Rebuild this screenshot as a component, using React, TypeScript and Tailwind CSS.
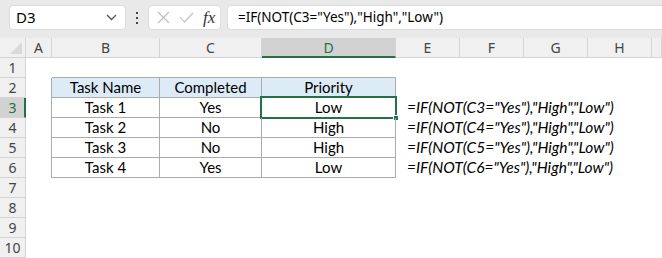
import React from "react";

const colW = [26, 26, 108, 102, 134, 64, 64, 64, 64, 10];
const colNames = ["", "A", "B", "C", "D", "E", "F", "G", "H", ""];

const data = [
  ["Task Name", "Completed", "Priority"],
  ["Task 1", "Yes", "Low"],
  ["Task 2", "No", "High"],
  ["Task 3", "No", "High"],
  ["Task 4", "Yes", "Low"],
];

const cellFont = { fontFamily: "Lato, 'Open Sans', sans-serif" };
const uiFont = { fontFamily: "'Noto Sans', 'Open Sans', sans-serif" };

function ColHeader() {
  return (
    <div className="flex h-[20px] bg-[#f0f0f0]" style={uiFont}>
      {colW.map((w, i) => {
        if (i === 0) {
          return (
            <div key={i} className="relative h-full border-r border-b border-[#d4d4d4] bg-[#f0f0f0]" style={{ width: w }}>
              <svg className="absolute right-[3px] bottom-[3px]" width="12" height="12" viewBox="0 0 12 12">
                <polygon points="12,0 12,12 0,12" fill="#d9d9d9" />
              </svg>
            </div>
          );
        }
        const sel = i === 4;
        return (
          <div
            key={i}
            className={
              sel
                ? "flex h-full items-center justify-center border-r border-[#d4d4d4] border-b-2 border-b-[#217346] bg-[#d2d2d2] text-[14px] text-[#217346]"
                : "flex h-full items-center justify-center border-r border-b border-[#d4d4d4] text-[14px] text-[#444]"
            }
            style={{ width: w }}
          >
            {colNames[i]}
          </div>
        );
      })}
    </div>
  );
}

function Row({ n }: { n: number }) {
  const tableRow = n >= 2 && n <= 6 ? data[n - 2] : null;
  const formula = n >= 3 && n <= 6 ? `=IF(NOT(C${n}="Yes"),"High","Low")` : null;
  return (
    <div className="flex h-[20px]">
      <div
        className={
          n === 3
            ? "flex h-full items-center justify-center border-b border-[#d4d4d4] border-r-2 border-r-[#217346] bg-[#d2d2d2] pl-[1px] text-[14px] text-[#217346]"
            : "flex h-full items-center justify-center border-r border-b border-[#d4d4d4] bg-[#f0f0f0] text-[14px] text-[#444]"
        }
        style={{ width: 26, ...uiFont }}
      >
        {n}
      </div>
      <div
        className={tableRow ? "h-full border-r border-[#ababab]" : "h-full"}
        style={{ width: 26 }}
      />
      {[0, 1, 2].map((c) => {
        const w = colW[c + 2];
        return (
          <div
            key={c}
            className={
              tableRow
                ? n === 2
                  ? "relative flex h-full items-center justify-center border-r border-b border-[#ababab] bg-[#ddebf7] text-[15px] text-black"
                  : "relative flex h-full items-center justify-center border-r border-b border-[#ababab] text-[15px] text-black"
                : n === 1
                ? "h-full border-b border-[#ababab]"
                : "h-full"
            }
            style={{ width: w, ...cellFont }}
          >
            {tableRow ? tableRow[c] : null}
            {n === 3 && c === 2 ? (
              <>
                <div className="absolute left-[-2px] top-[-2px] right-[-2px] bottom-[-2px] border-2 border-[#217346]" />
                <div className="absolute right-[-4px] bottom-[-4px] h-[6px] w-[6px] border border-white bg-[#217346]" />
              </>
            ) : null}
          </div>
        );
      })}
      <div className="relative h-full" style={{ width: 64 }}>
        {formula ? (
          <div
            className="absolute left-[11px] top-0 flex h-full items-center whitespace-nowrap text-[15.5px] italic text-black"
            style={cellFont}
          >
            {formula}
          </div>
        ) : null}
      </div>
    </div>
  );
}

export default function App() {
  return (
    <div className="h-[258px] w-[662px] overflow-hidden bg-white">
      <div className="flex h-[38px] items-start bg-[#e9e9e9] pt-[5px]" style={uiFont}>
        <div className="ml-[9px] flex h-[25px] w-[117px] items-center justify-between rounded-[4px] border border-[#dcdcdc] bg-white pl-[6px] pr-[8px] text-[15px] text-black">
          <span>D3</span>
          <svg width="11" height="7" viewBox="0 0 11 7">
            <polyline points="1,1 5.5,5.5 10,1" fill="none" stroke="#555" strokeWidth="1.3" />
          </svg>
        </div>
        <div className="flex h-[25px] w-[22px] flex-col items-center justify-center gap-[3px]">
          <div className="h-[2px] w-[2px] bg-[#444]" />
          <div className="h-[2px] w-[2px] bg-[#444]" />
          <div className="h-[2px] w-[2px] bg-[#444]" />
        </div>
        <div className="flex h-[25px] w-[73px] items-center rounded-[4px] border border-[#dcdcdc] bg-white pl-[8px]">
          <svg width="13" height="13" viewBox="0 0 13 13">
            <path d="M1 1 L12 12 M12 1 L1 12" stroke="#bdbdbd" strokeWidth="1.1" fill="none" />
          </svg>
          <svg className="ml-[9px]" width="15" height="11" viewBox="0 0 15 11">
            <path d="M1 5 L5.5 10 L14 1" stroke="#bdbdbd" strokeWidth="1.1" fill="none" />
          </svg>
          <span
            className="ml-[9px] text-[17px] italic leading-none text-[#333]"
            style={{ fontFamily: "'Liberation Serif', serif" }}
          >
            fx
          </span>
        </div>
        <div className="ml-[6px] flex h-[25px] flex-1 items-center rounded-l-[4px] border border-r-0 border-[#dcdcdc] bg-white pl-[10px] text-[13.5px] text-black">
          =IF(NOT(C3="Yes"),"High","Low")
        </div>
      </div>
      <ColHeader />
      {[1, 2, 3, 4, 5, 6, 7, 8, 9, 10].map((n) => (
        <Row key={n} n={n} />
      ))}
    </div>
  );
}
